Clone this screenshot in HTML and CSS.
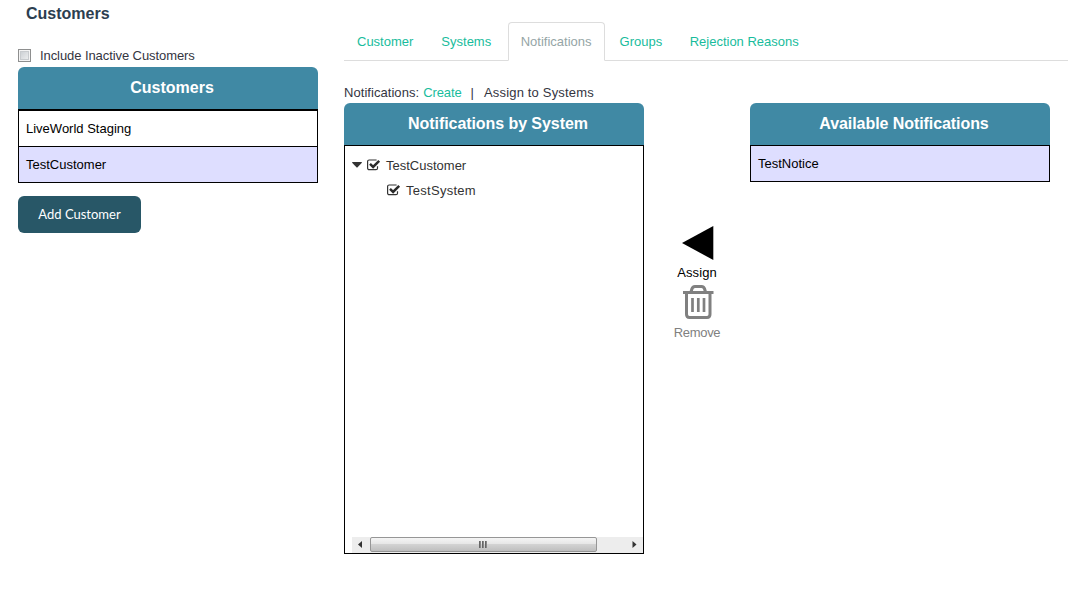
FILE: index.html
```html
<!DOCTYPE html>
<html lang="en">
<head>
<meta charset="utf-8">
<title>Customers</title>
<link rel="stylesheet" href="styles.css">
</head>
<body>
<div class="page">
  <aside class="sidebar">
    <h1 class="title">Customers</h1>
    <label class="inactive"><span class="box"></span><span class="inactive-text">Include Inactive Customers</span></label>
    <h2 class="panel-head">Customers</h2>
    <ul class="list list-thick">
      <li class="row">LiveWorld Staging</li>
      <li class="row selected">TestCustomer</li>
    </ul>
    <button class="add">Add Customer</button>
  </aside>
  <main class="content">
    <nav class="tabs">
      <a class="tab">Customer</a>
      <a class="tab">Systems</a>
      <a class="tab active">Notifications</a>
      <a class="tab">Groups</a>
      <a class="tab last">Rejection Reasons</a>
    </nav>
    <div class="subnav"><span class="label">Notifications:</span><a class="link">Create</a><span class="bar">|</span><span class="current">Assign to Systems</span></div>
    <div class="columns">
      <section class="panel">
        <h2 class="panel-head tight">Notifications by System</h2>
        <div class="tree">
          <div class="node">
            <svg class="caret" width="10" height="6" viewBox="0 0 10 6"><path d="M.4 0h9.2q.5.3 0 .9L5.600 5.300q-.6.5-1.200 0L.4.9Q-.1.3.4 0z" fill="#333"/></svg>
            <svg class="check" width="14" height="12" viewBox="0 0 14 12"><path d="M10.500 7.200v2a1.500 1.500 0 0 1-1.500 1.500H2.200A1.500 1.500 0 0 1 .6 9.200V2.500A1.500 1.500 0 0 1 2.200 1h7.400" fill="none" stroke="#333" stroke-width="1.200"/><path d="M3 4.900l3.100 3L12.200 1.800" fill="none" stroke="#2a2a2a" stroke-width="2.500"/></svg>
            <span>TestCustomer</span>
          </div>
          <div class="node child">
            <svg class="check" width="14" height="12" viewBox="0 0 14 12"><path d="M10.500 7.200v2a1.500 1.500 0 0 1-1.500 1.500H2.200A1.500 1.500 0 0 1 .6 9.200V2.500A1.500 1.500 0 0 1 2.200 1h7.400" fill="none" stroke="#333" stroke-width="1.200"/><path d="M3 4.900l3.100 3L12.200 1.800" fill="none" stroke="#2a2a2a" stroke-width="2.500"/></svg>
            <span class="system">TestSystem</span>
          </div>
          <div class="scroll">
            <svg class="arrow" width="18" height="16" viewBox="0 0 18 16"><path d="M10 4v7L6 7.500z" fill="#333"/></svg>
            <div class="thumb"><i class="grip"></i><i class="grip"></i><i class="grip"></i></div>
            <svg class="arrow" width="18" height="16" viewBox="0 0 18 16"><path d="M7.500 4v7L11.500 7.500z" fill="#333"/></svg>
          </div>
        </div>
      </section>
      <div class="actions">
        <svg class="assign-icon" width="32" height="34" viewBox="0 0 32 34"><path d="M0 17L31.300 0v34z" fill="#000"/></svg>
        <span class="assign">Assign</span>
        <svg class="trash" width="32" height="34" viewBox="0 0 32 34" fill="none" stroke="#808080" stroke-width="3"><path d="M1 7.500h30.500M9 7l.8-2.700Q10.500 1.500 13 1.500h6.500q2.500 0 3.200 2.800L23.500 7M4.500 7v22.200q0 3.300 3 3.300h17.500q3 0 3-3.300V7"/><path d="M10.500 13v14M16.300 13v14M22 13v14" stroke-width="2.700"/></svg>
        <span class="remove">Remove</span>
      </div>
      <section class="panel">
        <h2 class="panel-head tight">Available Notifications</h2>
        <ul class="list"><li class="row selected">TestNotice</li></ul>
      </section>
    </div>
  </main>
</div>
</body>
</html>
```
FILE: styles.css
```css
* { box-sizing: border-box; }
body {
  margin: 0;
  background: #fff;
  color: #34353f;
  font: 13px/20px "Liberation Sans", Arial, sans-serif;
  overflow: hidden;
}
svg { display: block; flex: none; }
.page { display: flex; gap: 26px; height: 593px; padding-left: 18px; }
.sidebar { width: 300px; flex: none; }
.title { margin: 4px 0 21px 8px; font-size: 16px; line-height: 20px; color: #2c3e50; }
.inactive { display: flex; align-items: center; gap: 9px; height: 20px; margin-bottom: 2px; }
.inactive-text { padding-top: 2px; letter-spacing: -0.08px; }
.box {
  width: 13px;
  height: 13px;
  border: 1px solid #8e8f8f;
  background: linear-gradient(135deg, #c4c9ce, #f4f4f4);
  box-shadow: inset 0 0 0 1px #f4f4f4, inset 0 0 0 2px #c8cbce;
}
.panel-head {
  margin: 0;
  height: 42px;
  padding-left: 8px;
  border-radius: 6px 6px 0 0;
  background: #4089a4;
  color: #fff;
  font-size: 16px;
  line-height: 41px;
  text-align: center;
}
.tight { letter-spacing: -0.07px; }
.list { margin: 0; padding: 0; list-style: none; border: 1px solid #000; color: #000; }
.list-thick { border-top-width: 2px; }
.row { height: 35px; padding-left: 7px; line-height: 35px; }
.row + .row { height: 36px; border-top: 1px solid #000; }
.selected { background: #dedeff; }
.add {
  display: block;
  width: 123px;
  height: 37px;
  margin-top: 13px;
  padding: 0 0 1px;
  border: 0;
  border-radius: 6px;
  background: #285767;
  color: #fff;
  font: 13px/36px Lato, sans-serif;
}
.content { flex: 1; min-width: 0; padding-top: 22px; }
.tabs { display: flex; height: 39px; border-bottom: 1px solid #ddd; }
.tab { height: 39px; padding: 10px 12px 0 13px; margin-right: 3px; line-height: 20px; color: #18bc9c; }
.active {
  margin-left: 1.5px;
  margin-right: 2px;
  padding: 9px 12px 0;
  border: 1px solid #ddd;
  border-bottom-color: #fff;
  border-radius: 4px 4px 0 0;
  color: #95a5a6;
}
.last { margin-left: -0.5px; }
.subnav { display: flex; height: 20px; margin: 22px 0 0; }
.link { margin-left: 4px; color: #18bc9c; letter-spacing: -0.1px; }
.label { letter-spacing: 0.05px; }
.bar { margin: 0 10px 0 9px; }
.current { letter-spacing: 0.18px; }
.columns { display: flex; }
.panel { width: 300px; flex: none; }
.tree { display: flex; flex-direction: column; height: 409px; padding: 7px 0 0 7px; border: 1px solid #000; }
.node { display: flex; align-items: center; height: 25px; color: #333; }
.caret { margin: 0 5px 2px 0; }
.check { margin: 0 5px 2px 0; }
.child { padding-left: 35px; }
.system { letter-spacing: 0.28px; }
.scroll { display: flex; height: 16px; margin-top: auto; background: #ededed; }
.thumb {
  display: flex;
  justify-content: center;
  align-items: center;
  gap: 1px;
  width: 227px;
  height: 15px;
  padding-right: 2px;
  border: 1px solid #969696;
  border-radius: 2px;
  background: linear-gradient(#f5f5f5, #e6e6e6 45%, #d2d2d2 50%, #bebebe);
}
.grip { width: 2px; height: 7px; background: linear-gradient(90deg, #555, #999); }
.scroll .arrow:last-child { margin-left: auto; }
.actions { display: flex; flex-direction: column; align-items: center; width: 106px; padding-top: 123px; }
.assign-icon { margin-left: 1px; }
.assign { margin-top: 3px; color: #000; letter-spacing: 0.1px; }
.trash { margin: 2px 0 0 1px; }
.remove { margin-top: 4px; color: #808080; letter-spacing: -0.3px; }
```
